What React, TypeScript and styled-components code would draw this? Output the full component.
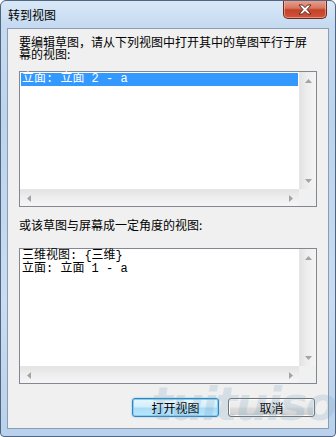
import styled, { createGlobalStyle } from "styled-components";

const GlobalStyle = createGlobalStyle`
  html, body {
    margin: 0;
    padding: 0;
    background: #ffffff;
  }
  body {
    font-family: "Noto Sans CJK SC", "Liberation Sans", sans-serif;
    font-size: 12px;
  }
`;

type ListItem = { text: string; selected?: boolean };

const topItems: ListItem[] = [{ text: "立面: 立面 2 - a", selected: true }];
const bottomItems: ListItem[] = [
  { text: "三维视图: {三维}" },
  { text: "立面: 立面 1 - a" },
];

const ScrollBox = ({ items }: { items: ListItem[] }) => (
  <ListBox>
    <ListContent>
      {items.map((item) => (
        <Row key={item.text} $selected={item.selected}>
          {item.text}
        </Row>
      ))}
    </ListContent>
    <VScroll>
      <ArrowButton>
        <Arrow viewBox="0 0 7 4">
          <path d="M0 4 L3.5 0 L7 4 Z" />
        </Arrow>
      </ArrowButton>
      <ArrowButton>
        <Arrow viewBox="0 0 7 4">
          <path d="M0 0 L7 0 L3.5 4 Z" />
        </Arrow>
      </ArrowButton>
    </VScroll>
    <HScroll>
      <ArrowButton>
        <Arrow viewBox="0 0 4 7" $small>
          <path d="M4 0 L4 7 L0 3.5 Z" />
        </Arrow>
      </ArrowButton>
      <ArrowButton>
        <Arrow viewBox="0 0 4 7" $small>
          <path d="M0 0 L4 3.5 L0 7 Z" />
        </Arrow>
      </ArrowButton>
    </HScroll>
    <Corner />
  </ListBox>
);

export default function App() {
  return (
    <>
      <GlobalStyle />
      <Window>
        <TitleBar>
          <Title>转到视图</Title>
          <CloseButton>
            <svg width="14" height="11" viewBox="0 0 14 11">
              <path
                d="M1 1 H4.5 L7 3.6 L9.5 1 H13 L9 5.5 L13 10 H9.5 L7 7.4 L4.5 10 H1 L5 5.5 Z"
                fill="#ffffff"
                stroke="#5a2a22"
                strokeWidth="1"
                strokeLinejoin="round"
              />
            </svg>
          </CloseButton>
        </TitleBar>
        <Client>
          <Label>要编辑草图，请从下列视图中打开其中的草图平行于屏幕的视图:</Label>
          <ScrollBox items={topItems} />
          <Label $top={12}>或该草图与屏幕成一定角度的视图:</Label>
          <Spacer />
          <ScrollBox items={bottomItems} />
          <ButtonRow>
            <Button $primary>打开视图</Button>
            <Button>取消</Button>
          </ButtonRow>
        </Client>
        <Watermark>
          tuituisoft<small>.com</small>
        </Watermark>
      </Window>
    </>
  );
}

const Window = styled.div`
  position: relative;
  width: 336px;
  height: 437px;
  box-sizing: border-box;
  border: 1px solid #4f6580;
  border-radius: 6px 6px 4px 4px;
  background: linear-gradient(
    180deg,
    #d9e8f7 0px,
    #c6dbf1 24px,
    #bcd4ee 120px,
    #c9dcf1 300px,
    #b9d1ec 437px
  );
  display: flex;
  flex-direction: column;
  overflow: hidden;
`;

const TitleBar = styled.div`
  height: 27px;
  display: flex;
  align-items: flex-start;
  justify-content: space-between;
  padding: 0 8px 0 7px;
`;

const Title = styled.div`
  margin-top: 7px;
  font-size: 12px;
  line-height: 14px;
  color: #000000;
`;

const CloseButton = styled.div`
  width: 44px;
  height: 19px;
  margin-top: -1px;
  box-sizing: border-box;
  border: 1px solid #6b2b23;
  border-top: none;
  border-radius: 0 0 5px 5px;
  background: linear-gradient(180deg, #e8a593 0%, #d77660 45%, #c44129 55%, #d2553c 100%);
  box-shadow: inset 0 0 0 1px rgba(255, 200, 190, 0.5);
  display: flex;
  align-items: center;
  justify-content: center;
`;

const Client = styled.div`
  margin: 0 6px 7px 6px;
  flex: 1;
  border: 1px solid #8a9db5;
  background: #f0f0f0;
  display: flex;
  flex-direction: column;
  padding: 7px 12px 0 11px;
`;

const Label = styled.div<{ $top?: number }>`
  margin-top: ${(p) => p.$top ?? 0}px;
  width: 298px;
  font-size: 12px;
  line-height: 12px;
  color: #000000;
  margin-bottom: 11px;
`;

const Spacer = styled.div`
  height: 6px;
`;

const ListBox = styled.div`
  width: 298px;
  height: 136px;
  box-sizing: border-box;
  border: 1px solid #828790;
  background: #ffffff;
  display: grid;
  grid-template-columns: 1fr 17px;
  grid-template-rows: 1fr 17px;
`;

const ListContent = styled.div`
  padding: 1px;
  font-family: "Liberation Mono", "Noto Sans CJK SC", monospace;
  font-size: 12px;
`;

const Row = styled.div<{ $selected?: boolean }>`
  height: 13px;
  line-height: 13px;
  padding-left: 1px;
  white-space: pre;
  background: ${(p) => (p.$selected ? "#3399ff" : "transparent")};
  color: ${(p) => (p.$selected ? "#ffffff" : "#000000")};
`;

const VScroll = styled.div`
  background: linear-gradient(90deg, #e3e3e3, #ededed 40%, #f5f5f5);
  border-left: 1px solid #e6e6e6;
  display: flex;
  flex-direction: column;
  justify-content: space-between;
`;

const HScroll = styled.div`
  background: linear-gradient(180deg, #e3e3e3, #ededed 40%, #f5f5f5);
  border-top: 1px solid #e6e6e6;
  display: flex;
  justify-content: space-between;
`;

const ArrowButton = styled.div`
  width: 17px;
  height: 17px;
  display: flex;
  align-items: center;
  justify-content: center;
`;

const Arrow = styled.svg<{ $small?: boolean }>`
  width: ${(p) => (p.$small ? 4 : 7)}px;
  height: ${(p) => (p.$small ? 7 : 4)}px;
  fill: #a3a3a3;
`;

const Corner = styled.div`
  background: #f0f0f0;
`;

const ButtonRow = styled.div`
  margin-top: 14px;
  width: 298px;
  display: flex;
  justify-content: flex-end;
  gap: 9px;
  padding-right: 2px;
  box-sizing: border-box;
`;

const Button = styled.div<{ $primary?: boolean }>`
  width: 87px;
  height: 19px;
  box-sizing: border-box;
  border-radius: 3px;
  border: 1px solid ${(p) => (p.$primary ? "#3c7fb1" : "#707070")};
  background: ${(p) =>
    p.$primary
      ? "linear-gradient(180deg, #e8f6fd 0%, #d2eefb 48%, #a9dbf6 52%, #bde6fa 100%)"
      : "linear-gradient(180deg, #f2f2f2 0%, #ebebeb 48%, #dddddd 52%, #cfcfcf 100%)"};
  box-shadow: ${(p) =>
    p.$primary ? "inset 0 0 0 1px #7ed2f7, 0 0 2px #6cc3ef" : "inset 0 0 0 1px #fcfcfc"};
  font-size: 12px;
  line-height: 17px;
  text-align: center;
  color: #000000;
`;

const Watermark = styled.div`
  position: absolute;
  left: 150px;
  top: 378px;
  font-family: "DejaVu Sans", sans-serif;
  font-weight: bold;
  font-style: italic;
  font-size: 46px;
  line-height: 50px;
  letter-spacing: -2px;
  color: rgba(120, 160, 190, 0.22);
  pointer-events: none;
  white-space: nowrap;

  small {
    font-size: 20px;
    letter-spacing: 0;
    color: rgba(120, 200, 235, 0.35);
  }
`;
